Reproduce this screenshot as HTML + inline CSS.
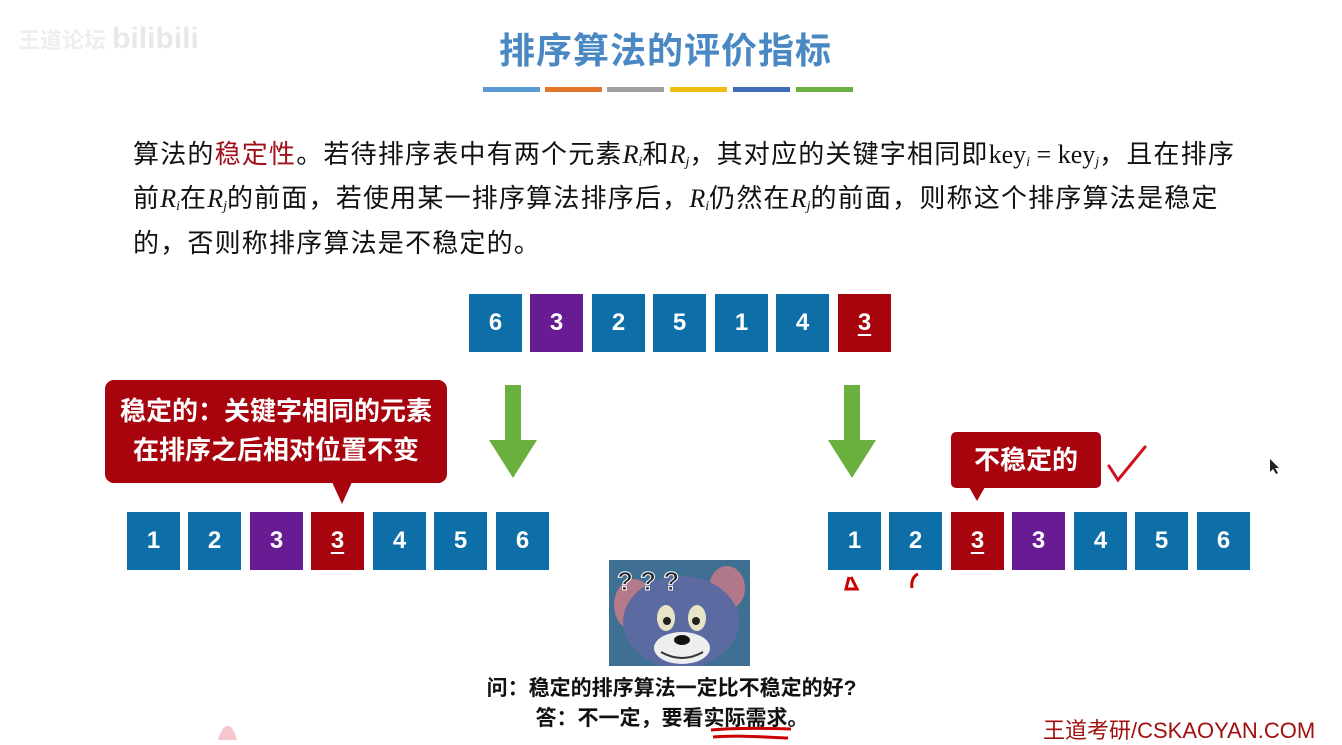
<!DOCTYPE html>
<html><head><meta charset="utf-8"><style>
*{margin:0;padding:0;box-sizing:border-box}
body{width:1342px;height:740px;background:#fff;position:relative;overflow:hidden;font-family:"Liberation Sans","Noto Sans CJK SC",sans-serif}
.a{position:absolute}
.b{position:absolute;width:53px;height:58px;color:#fff;font-size:24px;font-weight:bold;display:flex;align-items:center;justify-content:center}
.bl{background:#0e6ea8}.pu{background:#671c94}.rd{background:#a7040e}
.u{text-decoration:underline;text-decoration-thickness:2px;text-underline-offset:4px}
.t{font-size:26px;color:#111;white-space:nowrap;left:133px;letter-spacing:1.2px}
i{font-family:"Liberation Serif",serif;font-style:italic;letter-spacing:0}
sub{font-size:14px;vertical-align:-3px}
.m{font-family:"Liberation Serif",serif}
</style></head><body>
<div class="a" style="left:18px;top:22px;font-size:22px;color:#eee;font-weight:bold">王道论坛 <span style="font-size:30px;color:#e8e8e8">bilibili</span></div>
<div class="a" style="left:499px;top:22px;font-size:36px;font-weight:bold;color:#4a88c4;letter-spacing:1px">排序算法的评价指标</div>
<div class="a" style="left:483px;top:87px;width:57px;height:5px;background:#5b9bd5"></div>
<div class="a" style="left:545px;top:87px;width:57px;height:5px;background:#e4762c"></div>
<div class="a" style="left:607px;top:87px;width:57px;height:5px;background:#a0a0a0"></div>
<div class="a" style="left:670px;top:87px;width:57px;height:5px;background:#f2bd13"></div>
<div class="a" style="left:733px;top:87px;width:57px;height:5px;background:#3d6db8"></div>
<div class="a" style="left:796px;top:87px;width:57px;height:5px;background:#6ab045"></div>

<div class="a t" style="top:134px">算法的<span style="color:#a0101c">稳定性</span>。若待排序表中有两个元素<i>R<sub>i</sub></i>和<i>R<sub>j</sub></i>，其对应的关键字相同即<span class="m" style="letter-spacing:0">key<sub><i>i</i></sub> = key<sub><i>j</i></sub></span>，且在排序</div>
<div class="a t" style="top:178px">前<i>R<sub>i</sub></i>在<i>R<sub>j</sub></i>的前面，若使用某一排序算法排序后，<i>R<sub>i</sub></i>仍然在<i>R<sub>j</sub></i>的前面，则称这个排序算法是稳定</div>
<div class="a t" style="top:223px">的，否则称排序算法是不稳定的。</div>

<div class="b bl" style="left:469px;top:294px">6</div>
<div class="b pu" style="left:530px;top:294px">3</div>
<div class="b bl" style="left:592px;top:294px">2</div>
<div class="b bl" style="left:653px;top:294px">5</div>
<div class="b bl" style="left:715px;top:294px">1</div>
<div class="b bl" style="left:776px;top:294px">4</div>
<div class="b rd" style="left:838px;top:294px"><span class="u">3</span></div>

<svg class="a" style="left:0;top:0" width="1342" height="740">
<path d="M505 385h16v55h16l-24 38-24-38h16z" fill="#69b03f"/>
<path d="M844 385h16v55h16l-24 38-24-38h16z" fill="#69b03f"/>
<rect x="105" y="380" width="342" height="103" rx="9" fill="#a7040e"/>
<path d="M332 482h20l-10 22z" fill="#a7040e"/>
<rect x="951" y="432" width="150" height="56" rx="5" fill="#a7040e"/>
<path d="M969 487h16l-8 14z" fill="#a7040e"/>
<path d="M1109 466l9 14 L1145 447" stroke="#d0101c" stroke-width="3" fill="none" stroke-linecap="round"/>
<path d="M849 577l-3 12h11l-6-12" stroke="#c00" stroke-width="3" fill="none"/>
<path d="M918 574c-5 2-7 8-6 14" stroke="#c00" stroke-width="3" fill="none"/>
<path d="M711 730c20-2 50-2 80-1M713 737c25-2 50 0 75 1" stroke="#c00" stroke-width="3" fill="none"/>
<path d="M1270 459l0 13 3-3 3 5 2-1-3-5 4 0z" fill="#222"/>
<path d="M218 740c3-10 6-14 10-14s7 6 9 14" fill="#f5c6cc"/>
</svg>
<div class="a" style="left:105px;top:392px;width:342px;text-align:center;color:#fff;font-size:26px;font-weight:bold;line-height:39px">稳定的：关键字相同的元素<br>在排序之后相对位置不变</div>
<div class="a" style="left:951px;top:443px;width:150px;text-align:center;color:#fff;font-size:26px;font-weight:bold;line-height:34px">不稳定的</div>

<div class="b bl" style="left:127px;top:512px">1</div>
<div class="b bl" style="left:188px;top:512px">2</div>
<div class="b pu" style="left:250px;top:512px">3</div>
<div class="b rd" style="left:311px;top:512px"><span class="u">3</span></div>
<div class="b bl" style="left:373px;top:512px">4</div>
<div class="b bl" style="left:434px;top:512px">5</div>
<div class="b bl" style="left:496px;top:512px">6</div>

<div class="b bl" style="left:828px;top:512px">1</div>
<div class="b bl" style="left:889px;top:512px">2</div>
<div class="b rd" style="left:951px;top:512px"><span class="u">3</span></div>
<div class="b pu" style="left:1012px;top:512px">3</div>
<div class="b bl" style="left:1074px;top:512px">4</div>
<div class="b bl" style="left:1135px;top:512px">5</div>
<div class="b bl" style="left:1197px;top:512px">6</div>

<svg class="a" style="left:609px;top:560px" width="141" height="106">
<rect width="141" height="106" fill="#3f6f92"/>
<ellipse cx="25" cy="45" rx="20" ry="26" fill="#b57a8a"/>
<ellipse cx="118" cy="28" rx="18" ry="22" fill="#b07888"/>
<ellipse cx="72" cy="62" rx="58" ry="46" fill="#5b6aa0"/>
<ellipse cx="57" cy="58" rx="9" ry="13" fill="#e8e4c8"/>
<ellipse cx="88" cy="58" rx="9" ry="13" fill="#e8e4c8"/>
<circle cx="58" cy="61" r="4" fill="#222"/><circle cx="87" cy="61" r="4" fill="#222"/>
<ellipse cx="73" cy="88" rx="28" ry="16" fill="#eeeeee"/>
<ellipse cx="73" cy="80" rx="8" ry="5" fill="#111"/>
<path d="M52 92q21 12 42 0" stroke="#333" stroke-width="2" fill="none"/>
<text x="8" y="30" font-size="26" font-weight="bold" fill="#222" stroke="#fff" stroke-width="1" font-family="Liberation Sans">? ? ?</text>
</svg>
<div class="a" style="left:0;width:1342px;top:672px;text-align:center;font-size:21px;font-weight:bold;color:#111;padding-left:1px">问：稳定的排序算法一定比不稳定的好?</div>
<div class="a" style="left:0;width:1342px;top:702px;text-align:center;font-size:21px;font-weight:bold;color:#111;padding-left:2px">答：不一定，要看实际需求。</div>
<div class="a" style="left:1043px;top:713px;font-size:22px;color:#a01010">王道考研/CSKAOYAN.COM</div>
</body></html>
